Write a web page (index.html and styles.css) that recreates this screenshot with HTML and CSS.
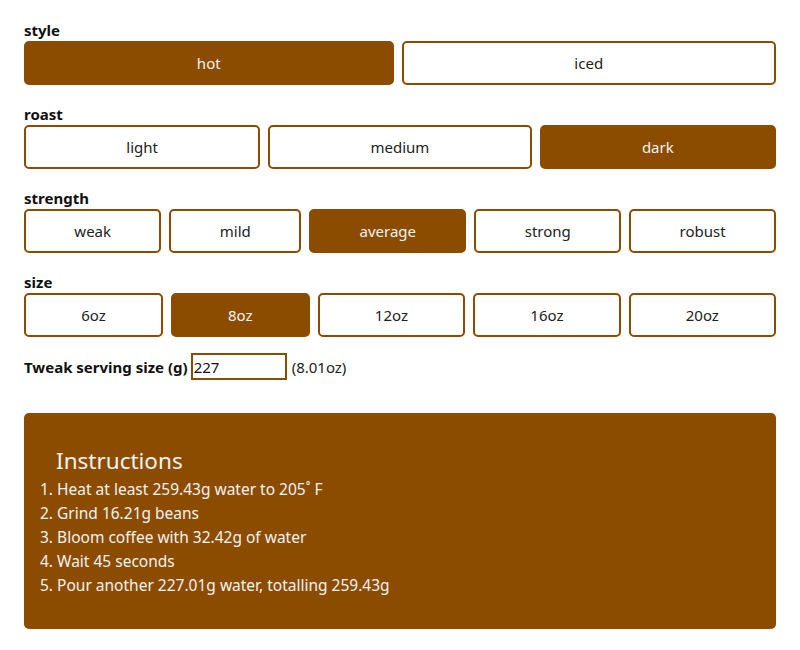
FILE: index.html
```html
<!DOCTYPE html>
<html>
<head>
<meta charset="utf-8">
<link rel="stylesheet" href="styles.css">
</head>
<body>
<div class="app">
  <div class="group">
    <div class="label">style</div>
    <div class="options">
      <button class="opt on">hot</button>
      <button class="opt">iced</button>
    </div>
  </div>
  <div class="group">
    <div class="label">roast</div>
    <div class="options">
      <button class="opt">light</button>
      <button class="opt">medium</button>
      <button class="opt on">dark</button>
    </div>
  </div>
  <div class="group">
    <div class="label">strength</div>
    <div class="options">
      <button class="opt">weak</button>
      <button class="opt">mild</button>
      <button class="opt on">average</button>
      <button class="opt">strong</button>
      <button class="opt">robust</button>
    </div>
  </div>
  <div class="group last">
    <div class="label">size</div>
    <div class="options">
      <button class="opt">6oz</button>
      <button class="opt on">8oz</button>
      <button class="opt">12oz</button>
      <button class="opt">16oz</button>
      <button class="opt">20oz</button>
    </div>
  </div>
  <div class="tweak">
    <label class="tweak-label">Tweak serving size (g)</label>
    <input class="tweak-input" type="text" value="227">
    <span class="tweak-oz">(8.01oz)</span>
  </div>
  <div class="instructions">
    <h2 class="inst-title">Instructions</h2>
    <ol class="steps">
      <li>Heat at least 259.43g water to 205˚ F</li>
      <li>Grind 16.21g beans</li>
      <li>Bloom coffee with 32.42g of water</li>
      <li>Wait 45 seconds</li>
      <li>Pour another 227.01g water, totalling 259.43g</li>
    </ol>
  </div>
</div>
</body>
</html>
```

FILE: styles.css
```css
* { box-sizing: border-box; }
body {
  margin: 0;
  background: #fff;
  font-family: "Noto Sans", "Open Sans", sans-serif;
  color: #222;
}
.app {
  padding: 21px 24px 20px;
}
.group {
  margin-bottom: 20px;
}
.group.last {
  margin-bottom: 16px;
}
.label {
  font-weight: bold;
  font-size: 15px;
  line-height: 18px;
  height: 20px;
  color: #111;
}
.options {
  display: flex;
  gap: 8px;
}
.opt {
  flex: 1 1 auto;
  height: 44px;
  border: 2px solid #8b4c00;
  border-radius: 5px;
  background: #fff;
  color: #222;
  font-family: inherit;
  font-size: 15px;
  padding: 0 6px;
}
.opt.on {
  background: #8b4c00;
  color: #f2f2f2;
}
.tweak {
  display: flex;
  align-items: center;
  height: 27px;
  font-size: 15px;
}
.tweak-label {
  font-weight: bold;
  color: #111;
  margin-right: 3px;
}
.tweak-input {
  width: 96px;
  height: 27px;
  border: 2px solid #8b4c00;
  border-radius: 0;
  padding: 0 1px;
  font-family: inherit;
  font-size: 15px;
  color: #111;
  outline: none;
}
.tweak-oz {
  margin-left: 5px;
  color: #222;
}
.instructions {
  margin-top: 33px;
  background: #8b4c00;
  border-radius: 5px;
  padding: 32px 16px;
  color: #f2f2f2;
}
.inst-title {
  margin: 0;
  padding-left: 16px;
  font-size: 22.5px;
  font-weight: normal;
  line-height: 32px;
}
.steps {
  margin: 0;
  padding: 0;
  list-style-position: inside;
  font-size: 15.5px;
  line-height: 24px;
}
```
